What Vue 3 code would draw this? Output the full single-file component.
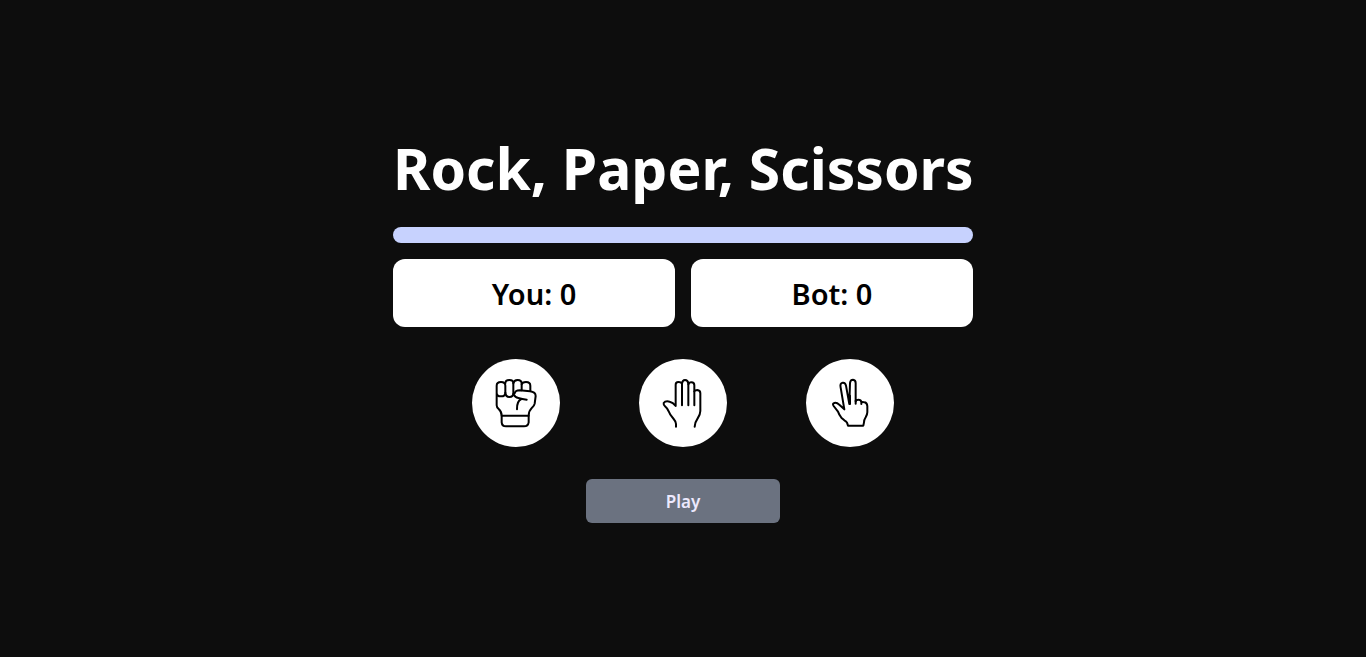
<script setup>
import { computed, ref } from 'vue'

const moves = [
  {
    name: 'Rock',
    width: 6,
    paths: [
      'M32 68V47Q32 36 45 36Q58 36 58 47V68Q58 79 45 79Q32 79 32 68V106Q32 112 38 117Q47 125 47 137',
      'M58 40Q58 30 70 30Q82 30 82 40V70Q82 81 70 81Q59 81 58 68',
      'M82 40Q84 30 95 30Q107 30 107 41V61',
      'M107 43Q109 36 120 36Q133 36 133 47V63',
      'M82 72Q87 82 97 84Q109 87 122 89',
      'M86 70Q88 61 101 61L132 64Q149 66 149 78L146 101Q145 107 138 113Q128 123 128 137',
      'M106 87Q92 94 93 118',
      'M47 137H128V157Q126 169 114 169H60Q48 169 47 157Z'
    ]
  },
  {
    name: 'Paper',
    width: 6,
    paths: [
      'M69 170V162Q69 155 62 147Q50 134 47 124Q44 116 36 109Q31 105 32 99Q37 92 50 95Q60 97 68 108V44Q68 36 76 36Q86 36 87 42V106',
      'M87 41Q88 30 96 30Q105 30 106 41V106',
      'M106 43Q108 37 115 37Q124 37 124 46V106',
      'M124 64Q126 60 133 60Q142 61 142 70V123Q142 133 134 145Q125 158 125 170'
    ]
  },
  {
    name: 'Scissors',
    width: 6,
    paths: [
      'M84 167L81 158Q79 154 73 151L64 143Q58 136 54 125L41 108Q36 101 43 99Q50 97 58 104L73 118L62 53Q59 39 68 38Q76 37 78 47L88 102L90 39Q91 29 99 29Q107 30 107 39V94Q109 89 115 89Q123 89 124 96V102V98Q127 94 134 97Q141 99 142 108V127Q142 133 137 142Q132 150 132 157L130 167Z',
      'M90 77V102M107 92V101'
    ]
  }
]

const you = ref(0)
const bot = ref(0)
const picked = ref(-1)
const canPlay = computed(() => picked.value >= 0)

function play() {
  if (!canPlay.value) return
  const rival = Math.floor(Math.random() * 3)
  const result = (picked.value - rival + 3) % 3
  if (result === 1) you.value++
  if (result === 2) bot.value++
}
</script>

<template>
  <main class="page">
    <section class="game">
      <h1 class="title">Rock, Paper, Scissors</h1>
      <div class="bar"></div>
      <div class="scores">
        <p class="score">You: {{ you }}</p>
        <p class="score">Bot: {{ bot }}</p>
      </div>
      <div class="moves">
        <button
          v-for="(move, i) in moves"
          :key="move.name"
          type="button"
          class="move"
          :class="{ picked: picked === i }"
          :aria-label="move.name"
          @click="picked = i"
        >
          <svg class="hand" viewBox="0 0 180 198" :stroke-width="move.width" aria-hidden="true">
            <path v-for="d in move.paths" :key="d" :d="d" />
          </svg>
        </button>
      </div>
      <button type="button" class="play" @click="play">Play</button>
    </section>
  </main>
</template>

<style>
body {
  background: #0d0d0d;
}
</style>

<style scoped>
.page {
  min-height: 100vh;
  display: flex;
  align-items: center;
  justify-content: center;
  font-family: "Segoe UI", "Noto Sans", "Open Sans", sans-serif;
}

.game {
  width: 100%;
  max-width: 580px;
  display: flex;
  flex-direction: column;
}

.title {
  margin: 0 0 24px;
  color: #fff;
  font-size: 57px;
  font-weight: 700;
  line-height: 69px;
  text-align: center;
  white-space: nowrap;
}

.bar {
  height: 16px;
  border-radius: 8px;
  background: #c7d2fe;
}

.scores {
  display: grid;
  grid-template-columns: 1fr 1fr;
  gap: 16px;
  margin: 16px 0 32px;
}

.score {
  margin: 0;
  padding: 16px 16px 14px;
  border-radius: 12px;
  background: #fff;
  color: #000;
  font-size: 29px;
  font-weight: 600;
  line-height: 38px;
  text-align: center;
}

.moves {
  display: flex;
  justify-content: space-evenly;
}

.move {
  width: 88px;
  height: 88px;
  padding: 0;
  display: flex;
  align-items: center;
  justify-content: center;
  border: 0;
  border-radius: 50%;
  background: #fff;
  cursor: pointer;
}

.move.picked {
  background: #c7d2fe;
}

.hand {
  width: 60px;
  height: 66px;
  fill: none;
  stroke: #000;
  stroke-linecap: round;
  stroke-linejoin: round;
}

.play {
  align-self: center;
  width: calc(100% / 3);
  margin-top: 32px;
  padding: 10px 10px 8px;
  border: 0;
  border-radius: 6px;
  background: #6b7280;
  color: #ede9fe;
  font-family: inherit;
  font-size: 17px;
  font-weight: 600;
  line-height: 26px;
  cursor: pointer;
}
</style>
